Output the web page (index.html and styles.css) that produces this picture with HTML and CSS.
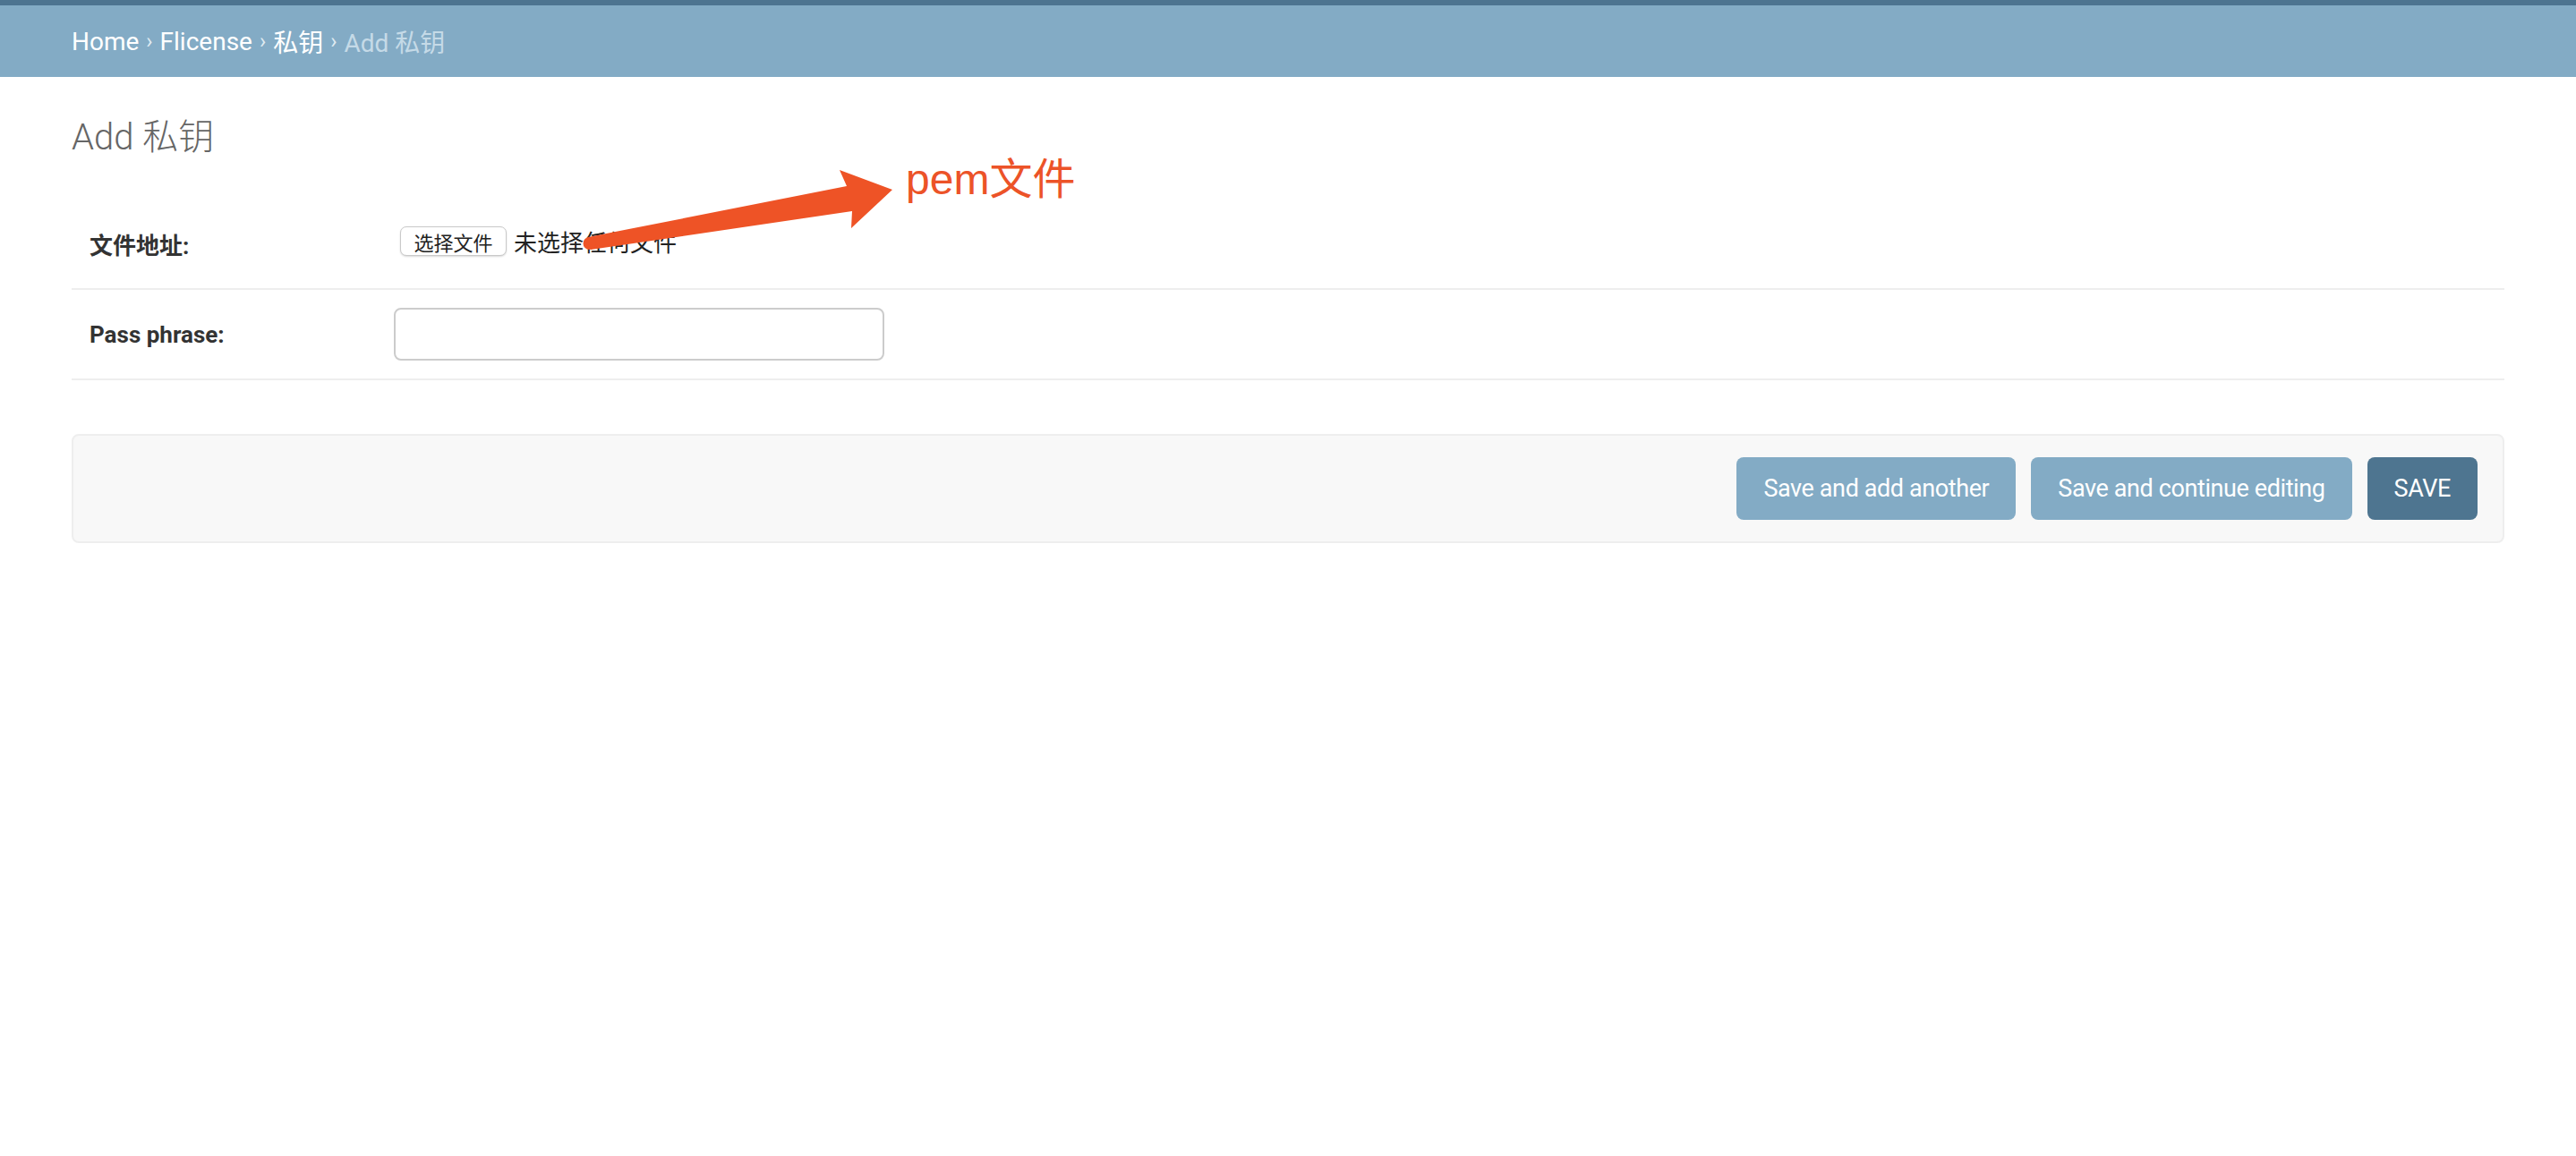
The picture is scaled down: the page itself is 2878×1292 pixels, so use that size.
FILE: index.html
```html
<!DOCTYPE html>
<html lang="zh">
<head>
<meta charset="utf-8">
<title>Add 私钥</title>
<link rel="stylesheet" href="styles.css">
</head>
<body>
<div class="topbar"></div>
<nav class="breadcrumbs">
  <a href="#">Home</a><span class="sep">›</span><a href="#">Flicense</a><span class="sep">›</span><a href="#">私钥</a><span class="sep">›</span><span class="current">Add 私钥</span>
</nav>
<main class="content">
  <h1 class="page-title">Add 私钥</h1>
  <form class="change-form">
    <fieldset class="module">
      <div class="form-row">
        <label class="field-label">文件地址:</label>
        <div class="file-input">
          <span class="file-btn">选择文件</span>
          <span class="file-status">未选择任何文件</span>
        </div>
      </div>
      <div class="form-row">
        <label class="field-label">Pass phrase:</label>
        <input type="password" class="text-field">
      </div>
    </fieldset>
    <div class="submit-row">
      <button type="button" class="btn">Save and add another</button>
      <button type="button" class="btn">Save and continue editing</button>
      <button type="button" class="btn btn-default">SAVE</button>
    </div>
  </form>
</main>
<svg class="annot-arrow" viewBox="0 0 1100 300" width="1100" height="300">
  <path d="M657 265 L946 208 L938 190 L997 212 L951 255 L952 236 L660 279 Z" fill="#ee5326"/>
  <circle cx="658.5" cy="272" r="7" fill="#ee5326"/>
</svg>
<div class="annot-text">pem文件</div>
</body>
</html>
```

FILE: styles.css
```css
html, body {
  margin: 0;
  padding: 0;
  background: #fff;
}

body {
  font-family: Roboto, "Noto Sans CJK SC", "DejaVu Sans", sans-serif;
  color: #333;
  position: relative;
  min-height: 1292px;
}

.topbar {
  height: 6px;
  background: #4d7490;
}

.breadcrumbs {
  height: 80px;
  display: flex;
  align-items: center;
  padding: 0 80px;
  background: #83abc5;
  font-size: 28px;
  color: #fff;
}

.breadcrumbs a {
  color: #fff;
  text-decoration: none;
}

.breadcrumbs .sep {
  margin: 0 8px;
  font-size: 24px;
  color: #e0ecf3;
}

.breadcrumbs .current {
  color: #c5dae7;
}

.content {
  padding: 44px 80px 0;
}

.page-title {
  margin: 0 0 45px;
  font-size: 40px;
  line-height: 48px;
  font-weight: 300;
  color: #666;
}

.change-form {
  margin: 0;
}

.module {
  margin: 0 0 60px;
  padding: 0;
  border: none;
}

.form-row {
  display: flex;
  align-items: center;
  padding: 20px;
  min-height: 59px;
  border-bottom: 2px solid #eee;
}

.field-label {
  flex: none;
  width: 340px;
  font-size: 26px;
  font-weight: bold;
  color: #333;
}

.file-input {
  display: flex;
  align-items: center;
  margin-top: -6px;
}

.file-btn {
  margin-left: 7px;
  width: 119px;
  height: 33px;
  box-sizing: border-box;
  display: inline-flex;
  align-items: center;
  justify-content: center;
  border: 1px solid #c9c9c9;
  border-radius: 7px;
  background: #fff;
  box-shadow: 0 1px 2px rgba(0, 0, 0, 0.15);
  font-size: 22px;
  color: #222;
}

.file-status {
  margin-left: 8px;
  font-size: 26px;
  color: #222;
}

.text-field {
  width: 548px;
  height: 59px;
  box-sizing: border-box;
  border: 2px solid #ccc;
  border-radius: 8px;
  background: #fff;
  margin: 0;
  padding: 0 12px;
}

.submit-row {
  display: flex;
  justify-content: flex-end;
  gap: 17px;
  padding: 24px 28px;
  background: #f8f8f8;
  border: 2px solid #eee;
  border-radius: 8px;
}

.btn {
  height: 70px;
  padding: 0 30px;
  border: none;
  border-radius: 8px;
  background: #83abc5;
  color: #fff;
  font-family: Roboto, "Noto Sans CJK SC", sans-serif;
  font-size: 27px;
  letter-spacing: -0.4px;
  cursor: pointer;
}

.btn-default {
  background: #4e7590;
}

.annot-arrow {
  position: absolute;
  left: 0;
  top: 0;
  pointer-events: none;
}

.annot-text {
  position: absolute;
  left: 1012px;
  top: 177px;
  font-family: "Liberation Sans", "Noto Sans CJK SC", sans-serif;
  font-size: 48px;
  line-height: 48px;
  color: #ec5328;
}
```
